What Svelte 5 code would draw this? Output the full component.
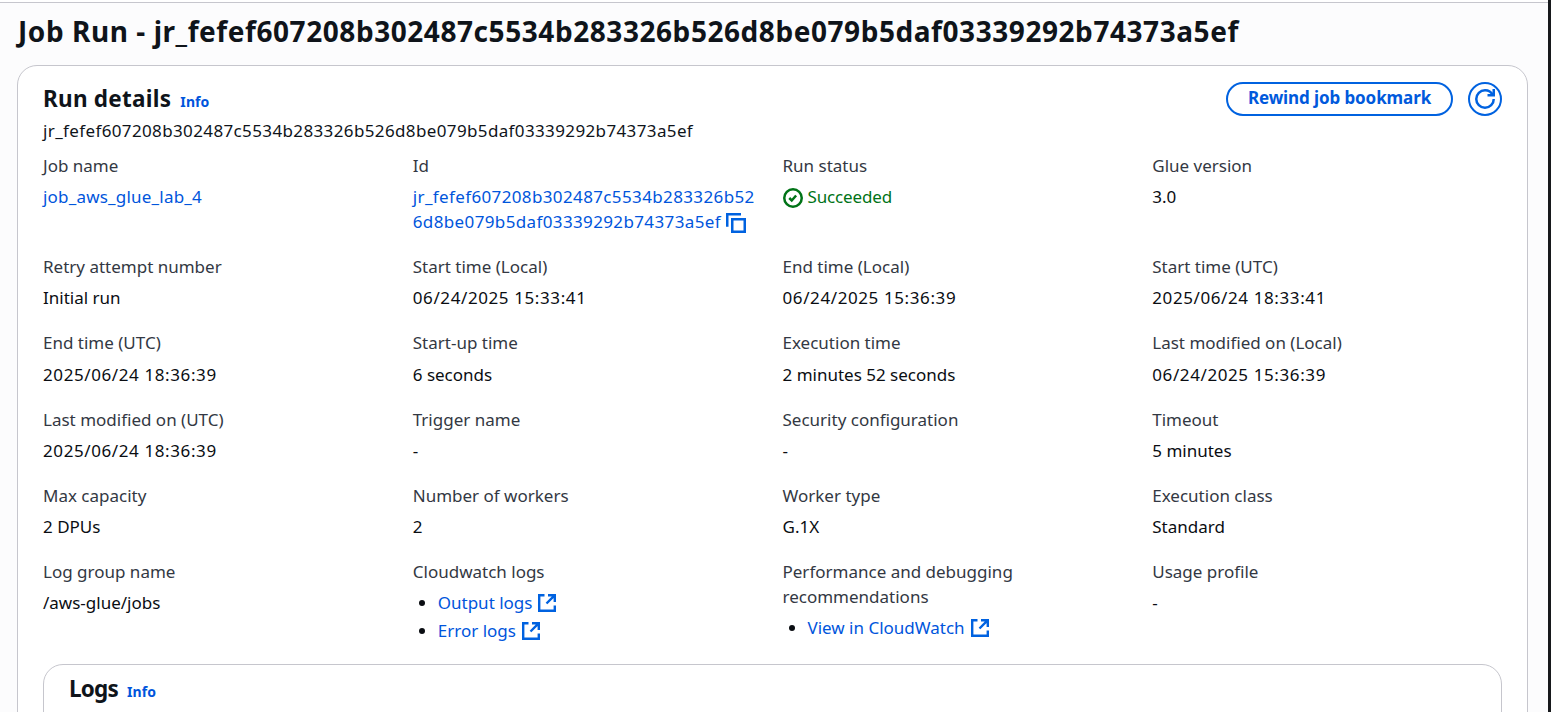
<script>
  const runId = 'jr_fefef607208b302487c5534b283326b526d8be079b5daf03339292b74373a5ef';

  const fields = [
    { label: 'Job name', value: 'job_aws_glue_lab_4', kind: 'link' },
    { label: 'Id', kind: 'id' },
    { label: 'Run status', value: 'Succeeded', kind: 'status' },
    { label: 'Glue version', value: '3.0' },
    { label: 'Retry attempt number', value: 'Initial run' },
    { label: 'Start time (Local)', value: '06/24/2025 15:33:41', num: true },
    { label: 'End time (Local)', value: '06/24/2025 15:36:39', num: true },
    { label: 'Start time (UTC)', value: '2025/06/24 18:33:41', num: true },
    { label: 'End time (UTC)', value: '2025/06/24 18:36:39', num: true },
    { label: 'Start-up time', value: '6 seconds' },
    { label: 'Execution time', value: '2 minutes 52 seconds' },
    { label: 'Last modified on (Local)', value: '06/24/2025 15:36:39', num: true },
    { label: 'Last modified on (UTC)', value: '2025/06/24 18:36:39', num: true },
    { label: 'Trigger name', value: '-' },
    { label: 'Security configuration', value: '-' },
    { label: 'Timeout', value: '5 minutes' },
    { label: 'Max capacity', value: '2 DPUs' },
    { label: 'Number of workers', value: '2' },
    { label: 'Worker type', value: 'G.1X' },
    { label: 'Execution class', value: 'Standard' },
    { label: 'Log group name', value: '/aws-glue/jobs' },
    { label: 'Cloudwatch logs', kind: 'list', links: ['Output logs', 'Error logs'] },
    { label: 'Performance and debugging recommendations', kind: 'list', links: ['View in CloudWatch'] },
    { label: 'Usage profile', value: '-' }
  ];
</script>

<div class="frame">
<main>
  <h1>Job Run - <span>{runId}</span></h1>

  <section class="card">
    <header>
      <div class="titles">
        <h2>Run details <a class="info" href="#info">Info</a></h2>
        <p class="hash">{runId}</p>
      </div>
      <div class="actions">
        <button class="rewind">Rewind job bookmark</button>
        <button class="refresh" aria-label="Refresh">
          <svg viewBox="0 0 16 16" width="20" height="20"><path d="M15 8c0 3.87-3.13 7-7 7s-7-3.13-7-7 3.13-7 7-7c2.79 0 5.2 1.63 6.33 4" /><path d="M10 5h5V0" /></svg>
        </button>
      </div>
    </header>

    <dl>
      {#each fields as f}
        <div class="field">
          <dt>{f.label}</dt>
          {#if f.kind === 'link'}
            <dd class="name"><a href="#job">{f.value}</a></dd>
          {:else if f.kind === 'id'}
            <dd class="id">
              <a href="#run">{runId.slice(0, 36)}<br />{runId.slice(36)}</a><svg class="copy" viewBox="0 0 16 16" width="20" height="20"><path d="M5 5h10v10H5z" /><path d="M1 11V1h11" /></svg>
            </dd>
          {:else if f.kind === 'status'}
            <dd class="status">
              <svg viewBox="0 0 16 16" width="20" height="20"><circle cx="8" cy="8" r="7" /><path d="m5 8 2 2 3.5-4" /></svg>{f.value}
            </dd>
          {:else if f.kind === 'list'}
            <dd>
              <ul>
                {#each f.links as l}
                  <li><a href="#logs">{l}<svg class="ext" viewBox="0 0 18 18" width="18" height="18"><path d="M6.5 1.2H1.2v15.6h15.6V11.5M10 1.2h6.8V8M16.8 1.2 8.5 9.5" /></svg></a></li>
                {/each}
              </ul>
            </dd>
          {:else}
            <dd class:num={f.num}>{f.value}</dd>
          {/if}
        </div>
      {/each}
    </dl>

    <section class="logs">
      <h2>Logs <a class="info" href="#logs-info">Info</a></h2>
    </section>
  </section>
</main>
</div>

<style>
  :global(body) { background: #fff; overflow: hidden; }
  .frame {
    box-sizing: border-box;
    height: 712px;
    padding-top: 2px;
    border-right: 3px solid #17191c;
    overflow: hidden;
  }
  main {
    box-sizing: border-box;
    height: 710px;
    padding: 9px 20px 0 17px;
    border-top: 1px solid #c6c6cd;
    background: #fcfcfd;
    color: #0f141a;
    font: 17px/25px 'Noto Sans', sans-serif;
    overflow: hidden;
  }
  h1, h2, p, dl, dd, ul { margin: 0; padding: 0; }
  h1 {
    font-size: 28px;
    line-height: 38px;
    font-weight: 700;
    letter-spacing: 0.56px;
    white-space: nowrap;
    height: 53px;
    padding-left: 1px;
  }
  .card {
    height: 700px;
    box-sizing: border-box;
    border: 1px solid #c6c6cd;
    border-radius: 20px;
    background: #fff;
    padding: 16px 25px;
  }
  header { display: flex; justify-content: space-between; height: 70.75px; }
  h2 { font-size: 22.5px; line-height: 33px; font-weight: 700; letter-spacing: 0.25px; }
  a { color: #0055dc; text-decoration: none; }
  .info { font-size: 14px; font-weight: 700; letter-spacing: 0.1px; margin-left: 3px; }
  p { color: #0f141a; }
  .hash { letter-spacing: 0.37px; }
  .id { letter-spacing: 0.37px; }
  .name { letter-spacing: 0.2px; }
  .actions { display: flex; gap: 15px; }
  button {
    box-sizing: border-box;
    height: 34px;
    border: 2px solid #0062e0;
    border-radius: 17px;
    background: #fff;
    color: #0059dc;
    padding: 0;
    font: 700 17px/28px 'Noto Sans', sans-serif;
  }
  .rewind { width: 227px; padding-bottom: 2px; letter-spacing: -0.1px; }
  .refresh { width: 34px; display: grid; place-items: center; }
  svg { fill: none; stroke: #0062e0; stroke-width: 2; }
  dl {
    display: grid;
    grid-template-columns: repeat(4, minmax(0, 1fr));
    gap: 20px;
  }
  dt { color: #333843; margin-bottom: 6.25px; }
  dd { color: #0a0d12; white-space: nowrap; }
  .num { letter-spacing: 0.6px; }
  .copy { margin-left: 5px; vertical-align: -5px; }
  .status { display: flex; align-items: center; gap: 5px; color: #007317; letter-spacing: -0.15px; }
  .status svg { stroke: #007317; position: relative; top: 1px; }
  ul { padding-left: 25px; }
  li { height: 28px; }
  .ext { margin-left: 6px; vertical-align: -3px; stroke-width: 2.4; }
  .logs {
    height: 80px;
    margin-top: 17.75px;
    border: 1px solid #c6c6cd;
    border-radius: 20px;
    padding: 7px 25px;
  }
  .logs h2 { letter-spacing: -0.8px; }
  .logs .info { margin-left: 4px; }
</style>
